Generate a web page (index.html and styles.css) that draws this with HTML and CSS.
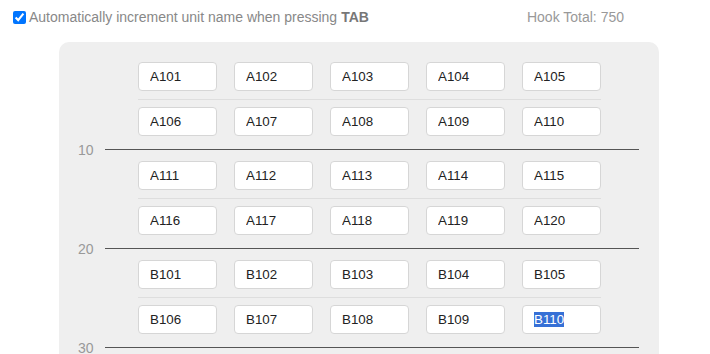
FILE: index.html
```html
<!DOCTYPE html>
<html lang="en">
<head>
 <meta charset="UTF-8">
 <title>Unit Names</title>
 <link rel="stylesheet" href="styles.css">
</head>
<body>
 <div class="header">
  <label class="auto">
   <input type="checkbox" checked>
   Automatically increment unit name when pressing <b>TAB</b>
  </label>
  <div class="total">Hook Total: 750</div>
 </div>

 <div class="panel">
  <div class="group">
   <div class="row">
    <input class="unit" value="A101"><input class="unit" value="A102"><input class="unit" value="A103"><input class="unit" value="A104"><input class="unit" value="A105">
   </div>
   <div class="row">
    <input class="unit" value="A106"><input class="unit" value="A107"><input class="unit" value="A108"><input class="unit" value="A109"><input class="unit" value="A110">
   </div>
  </div>
  <div class="divider"><span class="floor">10</span><span class="line"></span></div>

  <div class="group">
   <div class="row">
    <input class="unit" value="A111"><input class="unit" value="A112"><input class="unit" value="A113"><input class="unit" value="A114"><input class="unit" value="A115">
   </div>
   <div class="row">
    <input class="unit" value="A116"><input class="unit" value="A117"><input class="unit" value="A118"><input class="unit" value="A119"><input class="unit" value="A120">
   </div>
  </div>
  <div class="divider"><span class="floor">20</span><span class="line"></span></div>

  <div class="group">
   <div class="row">
    <input class="unit" value="B101"><input class="unit" value="B102"><input class="unit" value="B103"><input class="unit" value="B104"><input class="unit" value="B105">
   </div>
   <div class="row">
    <input class="unit" value="B106"><input class="unit" value="B107"><input class="unit" value="B108"><input class="unit" value="B109"><input class="unit" value="B110" id="current">
   </div>
  </div>
  <div class="divider"><span class="floor">30</span><span class="line"></span></div>
 </div>

 <script>
  // последнее поле выделено, как после нажатия TAB
  var current = document.getElementById('current');
  current.focus();
  current.select();
 </script>
</body>
</html>
```

FILE: styles.css
```css
body {
 font-family: "Liberation Sans", Arial, sans-serif;
 margin: 0;
 padding: 7px 8px;
 background: white;
}
.header {
 display: flex;
 justify-content: space-between;
 align-items: center;
 width: 616px;
 height: 20px;
 font-size: 14px;
 color: #888;
}
.auto {
 display: flex;
 align-items: center;
}
.auto input {
 margin: 0 3px 0 5px;
 width: 13px;
 height: 13px;
}
.auto b {
 color: #777;
 margin-left: 4px;
}
.total {
 color: #999;
}
.panel {
 margin-top: 15px;
 margin-left: 51px;
 width: 600px;
 box-sizing: border-box;
 background: #efefef;
 border-radius: 10px;
 padding: 20px 20px 30px 19px;
}
.group {
 margin-left: 60px;
 width: 463px;
}
.row {
 display: flex;
 gap: 17px;
}
.row:not(:last-child) {
 padding-bottom: 8px;
 border-bottom: 1px solid #dedede;
 margin-bottom: 7px;
}
.unit {
 box-sizing: border-box;
 width: 79px;
 height: 29px;
 padding: 0 11px;
 border: 1px solid #d6d6d6;
 border-radius: 4px;
 background: white;
 font-family: "Liberation Sans", Arial, sans-serif;
 font-size: 13.33px;
 color: #222;
 outline: none;
}
.unit::selection {
 background: #3670d6;
 color: white;
}
.divider {
 display: flex;
 align-items: center;
 height: 1px;
 margin: 13px 0 11px;
}
.floor {
 width: 27px;
 font-size: 14px;
 line-height: 16px;
 color: #999;
}
.line {
 flex: 1;
 height: 1px;
 background: #555;
}
```
